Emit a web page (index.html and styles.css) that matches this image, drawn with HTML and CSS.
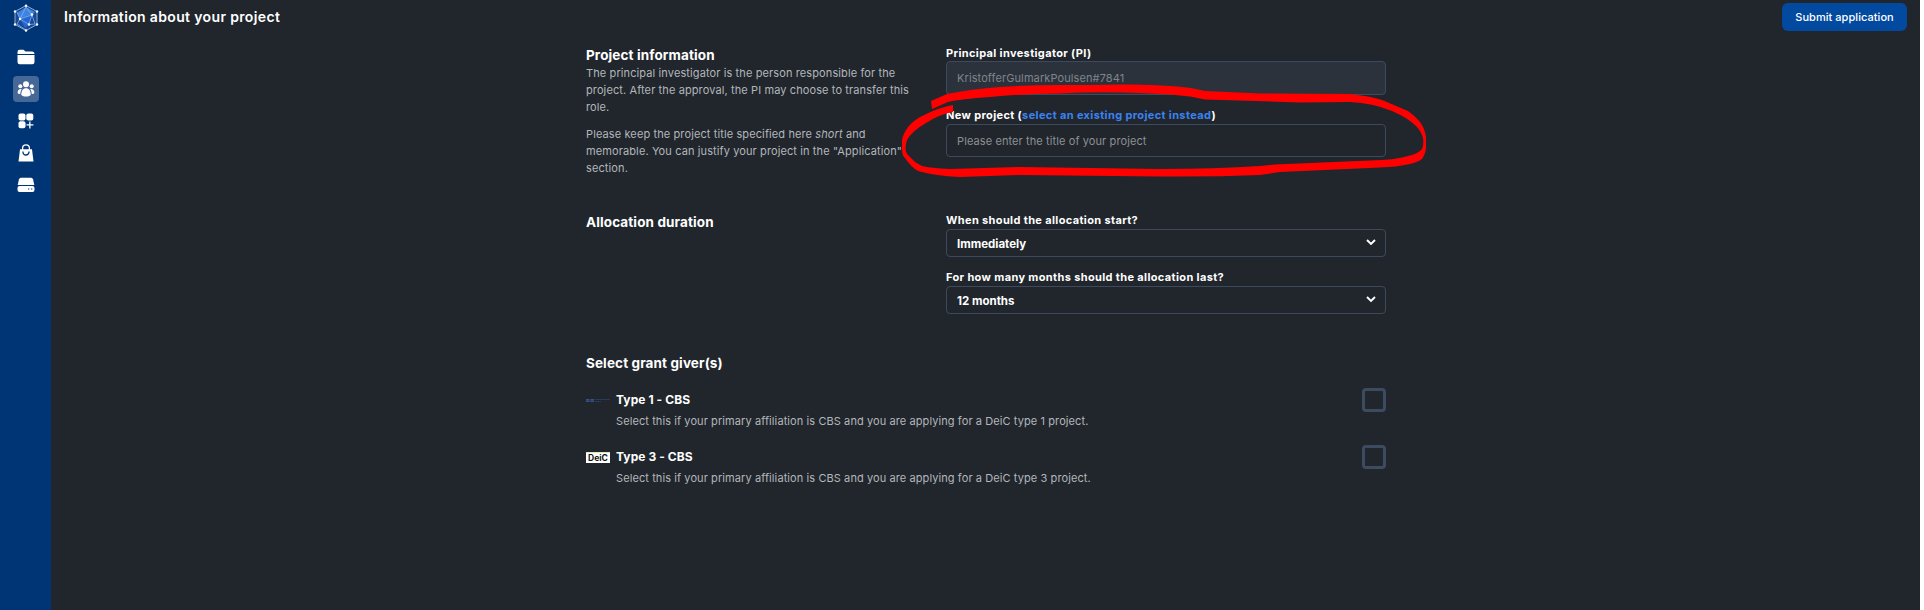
FILE: index.html
```html
<!DOCTYPE html>
<html lang="en">
<head>
<meta charset="utf-8">
<title>Information about your project</title>
<link rel="stylesheet" href="styles.css">
</head>
<body>
<div class="app">
  <nav class="sidebar">
    <a class="nav-logo"><svg width="26" height="28" viewBox="0 0 26 28">
      <path d="M13 1.5 24 7.5V20.500L13 26.500 2 20.500V7.500Z" fill="#164a94" stroke="#8fa9cc" stroke-width="1"/>
      <path d="M13 3 22 8 19 11 7 15 4 9Z" fill="#3f83e0"/>
      <path d="M7 15 19 11 16 21 12 24Z" fill="#2467cf"/>
      <path d="M13 3 19 11 22 20 16 20.500 7 15 13 3M4 8 7 15 4 20 13 26M7 15 19 11 16 20" fill="none" stroke="#8eb8f2" stroke-width=".7"/>
      <g fill="#fff"><circle cx="13" cy="1.700" r="1.200"/><circle cx="24" cy="7.500" r="1.200"/><circle cx="24" cy="20.500" r="1.200"/><circle cx="13" cy="26.500" r="1.200"/><circle cx="2" cy="20.500" r="1.200"/><circle cx="2" cy="7.500" r="1.200"/><circle cx="7" cy="15" r="1.200"/><circle cx="19" cy="10.500" r="1.300"/><circle cx="16" cy="20.500" r="1.200"/></g>
    </svg></a>
    <a class="nav-item"><svg width="18" height="16" viewBox="0 0 18 16" fill="#fff"><path d="M.5 5V3Q.5.800 2.700.800H6.500L8.500 2.500H15Q17.500 2.500 17.500 5Z"/><path d="M.5 6H17.500V13Q17.500 15.200 15.300 15.200H2.700Q.5 15.200.5 13Z"/></svg></a>
    <a class="nav-item active"><svg width="18" height="18" viewBox="0 0 18 18" fill="#fff"><circle cx="9" cy="4.300" r="3"/><circle cx="3.300" cy="6.200" r="2"/><circle cx="14.700" cy="6.200" r="2"/><path d="M4.300 14.500C4.300 10.500 6 8.200 9 8.200s4.700 2.300 4.700 6.300Q13 16.500 9 16.500T4.300 14.500Z"/><path d="M.7 12.500C.7 10 2 8.700 4.800 9 3.700 10.500 3.300 12.300 3.300 14 1.500 14 .7 13.500.7 12.500ZM17.300 12.500C17.300 10 16 8.700 13.200 9c1.100 1.500 1.500 3.300 1.500 5 1.800 0 2.600-.5 2.600-1.500Z"/></svg></a>
    <a class="nav-item"><svg width="16" height="16" viewBox="0 0 16 16" fill="#fff"><rect x=".5" y=".5" width="7" height="7" rx="2"/><rect x="8.300" y=".5" width="7" height="7" rx="2"/><rect x=".5" y="8.300" width="7" height="7" rx="2"/><path d="M11.200 8.500h1.300v2.800h2.900v1.300h-2.900v2.900h-1.300v-2.900H8.500v-1.300h2.700Z"/></svg></a>
    <a class="nav-item"><svg width="16" height="18" viewBox="0 0 16 18"><path d="M2 5.300H14L15.500 17.500H.5Z" fill="#fff"/><path d="M4.600 6V4.300a3.400 3.400 0 0 1 6.800 0V6" fill="none" stroke="#fff" stroke-width="1.300"/><path d="M4.900 7.500a3.100 3.500 0 0 0 6.200 0" fill="none" stroke="#003575" stroke-width="1.300"/></svg></a>
    <a class="nav-item"><svg width="18" height="16" viewBox="0 0 18 16"><path d="M3.800.8H14.200Q15.500.8 16 2.300L17.300 8H.7L2 2.300Q2.500.8 3.800.8Z" fill="#fff"/><rect x=".5" y="9" width="17" height="6" rx="2" fill="#fff"/><path d="M11 12h1.300M14 12h1.300" stroke="#003575" stroke-width="1.200"/></svg></a>
  </nav>
  <main class="main">
    <header class="topbar">
      <h1 class="page-title">Information about your project</h1>
      <button class="submit">Submit application</button>
    </header>
    <div class="form">
      <section class="row row-project">
        <div class="about">
          <h2 class="heading">Project information</h2>
          <p class="text">The principal investigator is the person responsible for the<br>project. After the approval, the PI may choose to transfer this<br>role.</p>
          <p class="text">Please keep the project title specified here <em>short</em> and<br>memorable. You can justify your project in the "Application"<br>section.</p>
        </div>
        <div class="fields">
          <label class="label">Principal investigator (PI)</label>
          <div class="input disabled">KristofferGulmarkPoulsen#7841</div>
          <label class="label label-new">New project (<a class="link">select an existing project instead</a>)</label>
          <div class="input input-title">Please enter the title of your project</div>
        </div>
      </section>
      <section class="row row-duration">
        <h2 class="heading">Allocation duration</h2>
        <div class="fields">
          <label class="label">When should the allocation start?</label>
          <div class="select"><span>Immediately</span><svg width="10" height="7" viewBox="0 0 10 7"><path d="M1 1 5 5 9 1" fill="none" stroke="#fff" stroke-width="1.900"/></svg></div>
          <label class="label label-months">For how many months should the allocation last?</label>
          <div class="select"><span>12 months</span><svg width="10" height="7" viewBox="0 0 10 7"><path d="M1 1 5 5 9 1" fill="none" stroke="#fff" stroke-width="1.900"/></svg></div>
        </div>
      </section>
      <section class="grants">
        <h2 class="heading">Select grant giver(s)</h2>
        <div class="grant">
          <svg class="grant-logo" width="24" height="24" viewBox="0 0 24 24"><path d="M0 11h3.500v3H0zM4.500 11H8v3H4.500z" fill="#39508a"/><path d="M0 12.500h8" stroke="#2a3860" stroke-width=".6"/><path d="M9 11.500h15M9 13.500h6" stroke="#2c3b61" stroke-width=".9"/></svg>
          <div class="grant-body"><h3 class="grant-title">Type 1 - CBS</h3><p class="grant-text">Select this if your primary affiliation is CBS and you are applying for a DeiC type 1 project.</p></div>
          <span class="checkbox"></span>
        </div>
        <div class="grant">
          <span class="grant-logo"><span class="deic">DeiC</span></span>
          <div class="grant-body"><h3 class="grant-title">Type 3 - CBS</h3><p class="grant-text">Select this if your primary affiliation is CBS and you are applying for a DeiC type 3 project.</p></div>
          <span class="checkbox"></span>
        </div>
      </section>
    </div>
  </main>
</div>
<svg class="marker" width="1924" height="610" viewBox="0 0 1924 610"><path fill="#f00" d="M931 101 947 94Q972 89 1000 87T1060 85 1120 84.500 1170 86Q1190 87 1205 91L1260 93.500 1350 94Q1370 96 1382 100L1408 111Q1416 117 1420 122 1425 129 1426 137V147Q1426 153 1422 159 1418 162 1410 164 1397 167 1380 167.500L1280 172 1260 175Q1210 177 1160 176.500L1020 175 960 177Q935 176 918 171 911 167 905 158 902 155 902 150V140Q903 134 908 127 914 120 922 116 940 107 953 105V112Q940 114 926 123 912 131 907 140 904 149 907 154L915 162 922 166Q930 168 950 169L1020 167 1160 169Q1215 169 1260 166L1275 164.500 1370 160.500Q1395 160 1408 156 1418 154 1422 149 1424 145 1423 138 1421 131 1416 126 1408 118 1392 111 1373 103 1350 102L1300 102.500 1205 99.500 1190 96.500Q1170 94 1150 93.500 1100 91 1060 93.500 1020 94 990 97 960 99 948 102L932 109Z"/></svg>
</body>
</html>
```
FILE: styles.css
```css
* { box-sizing: border-box; margin: 0; padding: 0; }
body { background: #fff; font-family: Inter, "Liberation Sans", sans-serif; color: #fff; position: relative; width: 1924px; height: 610px; overflow: hidden; }
.app { display: flex; width: 1920px; height: 610px; background: #21262d; }
.sidebar { width: 51px; background: #003575; display: flex; flex-direction: column; align-items: center; padding-top: 4px; gap: 6px; }
.nav-logo { display: flex; height: 34px; }
.nav-item { width: 26px; height: 26px; border-radius: 4px; display: flex; align-items: center; justify-content: center; }
.active { background: #456896; }
.main { flex: 1; }
.topbar { display: flex; align-items: center; justify-content: space-between; height: 34px; padding: 0 13px; }
.page-title { font-size: 14px; font-weight: 600; line-height: 20px; letter-spacing: .35px; }
.submit { width: 125px; height: 28px; border: 0; border-radius: 6px; background: #024a9f; color: #fff; font: 500 11px/28px Inter, sans-serif; letter-spacing: .05px; }
.form { width: 800px; margin-left: 535px; padding-top: 11px; }
.row { display: grid; grid-template-columns: 360px 440px; }
.row-project { height: 167px; }
.row-duration { height: 141px; }
.heading { font-size: 13.500px; font-weight: 700; line-height: 20px; letter-spacing: .12px; }
.about .text { font-size: 11px; line-height: 16.800px; color: #b3b6ba; margin-bottom: 11px; white-space: nowrap; letter-spacing: .11px; }
.label { display: block; font-size: 11px; font-weight: 700; line-height: 16px; height: 16px; white-space: nowrap; letter-spacing: .36px; }
.label-new { margin-top: 12px; height: 17px; }
.label-months { margin-top: 12px; }
.link { color: #3b82f0; }
.input { height: 34px; border: 1px solid #3d4a5d; border-radius: 4px; padding: 0 10px; font-size: 11px; line-height: 32px; letter-spacing: .1px; color: #8d9094; }
.input-title { height: 33px; }
.disabled { background: #2b323b; color: #7f858b; }
.select { height: 28px; margin-top: 1px; border: 1px solid #3d4a5d; border-radius: 4px; padding: 2px 9px 0 10px; display: flex; justify-content: space-between; align-items: center; font-size: 11.500px; font-weight: 700; }
.select svg { margin-top: -3px; }
.grants .heading { margin-bottom: 15px; }
.grant { display: flex; height: 57px; }
.grant-logo { width: 24px; height: 24px; display: flex; align-items: center; flex: none; }
.deic { width: 24px; height: 11px; background: #fff; color: #111; font-size: 8.500px; font-weight: 700; line-height: 11px; text-align: center; border-top: 1px solid #dcebb0; }
.grant-body { flex: 1; padding-left: 6px; }
.grant-title { font-size: 12px; font-weight: 700; line-height: 24px; letter-spacing: .08px; }
.grant-text { font-size: 11px; line-height: 17px; margin-top: 1px; color: #b3b6ba; white-space: nowrap; letter-spacing: .09px; }
.checkbox { width: 24px; height: 24px; border: 3px solid #3d4b60; border-radius: 4px; }
.marker { position: absolute; left: 0; top: 0; }
```
